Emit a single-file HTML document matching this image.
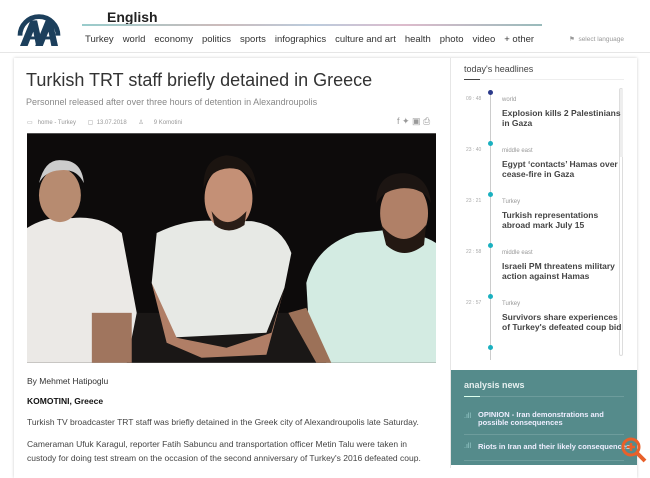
<!DOCTYPE html>
<html><head><meta charset="utf-8"><style>
*{margin:0;padding:0;box-sizing:border-box}
body{width:650px;height:465px;overflow:hidden;background:#fff;font-family:"Liberation Sans",sans-serif;position:relative}
.a{position:absolute;white-space:nowrap}
.nav span{margin-right:9px}
</style></head><body>
<svg class="a" style="left:16px;top:9px" width="46" height="38" viewBox="0 0 48 40">
<path d="M4 28 A20 20 0 0 1 44 28" fill="none" stroke="#1c3f5c" stroke-width="5"/>
<path d="M4 39 L15 12 L22 12 L28 39 L21 39 L18 24 L12 39Z" fill="#1c3f5c"/>
<path d="M20 39 L31 12 L38 12 L44 39 L37 39 L34 24 L28 39Z" fill="#1c3f5c"/>
<rect x="10" y="29" width="29" height="3" fill="#1c3f5c"/>
</svg>
<div class="a" style="left:107px;top:9px;font-size:14px;font-weight:bold;color:#222">English</div>
<div class="a" style="left:82px;top:24px;width:460px;height:2px;background:linear-gradient(90deg,#9cc 0,#cbb 30%,#bcd 50%,#dbc 70%,#9bb 100%)"></div>
<div class="a nav" style="left:85px;top:34px;font-size:9.5px;color:#333"><span>Turkey</span><span>world</span><span>economy</span><span>politics</span><span>sports</span><span>infographics</span><span>culture and art</span><span>health</span><span>photo</span><span>video</span><span>+ other</span></div>
<div class="a" style="left:569px;top:35px;font-size:6.5px;color:#999">⚑ &nbsp;select language</div>
<div class="a" style="left:0;top:52px;width:650px;height:1px;background:#e6e6e6"></div>
<div class="a" style="left:14px;top:58px;width:623px;height:420px;background:#fff;box-shadow:0 0 3px rgba(0,0,0,.2)"></div>
<div class="a" style="left:450px;top:58px;width:1px;height:410px;background:#e6e6e6"></div>
<div class="a" style="left:26px;top:70px;font-size:18px;color:#333">Turkish TRT staff briefly detained in Greece</div>
<div class="a" style="left:26px;top:97px;font-size:9px;color:#888">Personnel released after over three hours of detention in Alexandroupolis</div>
<div class="a" style="left:27px;top:119px;font-size:6px;color:#999">▭ &nbsp; home - Turkey &nbsp; &nbsp; &nbsp; ▢ &nbsp;13.07.2018 &nbsp; &nbsp; &nbsp; ♙ &nbsp; &nbsp; &nbsp;9 Komotini</div>
<div class="a" style="left:397px;top:116px;font-size:9px;color:#999">f ✦ ▣ ⎙</div>
<svg class="a" style="left:27px;top:133px" width="409" height="230" viewBox="0 0 410 230">
<rect width="410" height="230" fill="#0d0b0b"/>
<rect x="0" y="180" width="410" height="50" fill="#1a1716"/>
<path d="M0 95 Q20 82 45 85 Q75 82 95 100 L110 180 L100 230 L0 230Z" fill="#ebe9e6"/>
<ellipse cx="33" cy="62" rx="21" ry="27" fill="#b78b70"/>
<path d="M12 50 Q18 25 35 27 Q55 27 57 50 Q50 35 33 37 Q18 38 12 50Z" fill="#ccc"/>
<rect x="65" y="180" width="40" height="50" fill="#a0755e"/>
<path d="M130 100 Q160 85 190 88 L225 88 Q255 92 265 120 L258 155 L240 200 L140 205 L125 150Z" fill="#e7e9e5"/>
<ellipse cx="202" cy="65" rx="24" ry="32" fill="#c49076"/>
<path d="M177 55 Q176 25 200 22 Q228 24 230 55 Q222 35 203 35 Q183 36 177 55Z" fill="#1b1410"/>
<path d="M185 78 Q200 100 220 78 L218 92 Q202 103 188 92Z" fill="#2a1d17"/>
<path d="M125 150 L140 210 L175 225 L240 222 L258 155 L245 200 L200 215 L150 205Z" fill="#b07e66"/>
<path d="M280 150 Q290 112 330 100 L360 97 Q395 100 410 110 L410 230 L300 230 L282 185Z" fill="#d3ebe2"/>
<ellipse cx="378" cy="80" rx="24" ry="32" fill="#b08067"/>
<path d="M350 70 Q350 40 378 40 Q402 42 405 70 Q398 55 378 55 Q358 56 350 70Z" fill="#1c1512"/>
<path d="M355 92 Q378 120 400 92 L398 112 Q378 128 360 112Z" fill="#231812"/>
<path d="M262 180 L290 230 L305 230 L280 175Z" fill="#9c7158"/>
</svg>
<div class="a" style="left:27px;top:376px;font-size:8.5px;color:#333">By Mehmet Hatipoglu</div>
<div class="a" style="left:27px;top:396px;font-size:8.5px;color:#111;font-weight:bold">KOMOTINI, Greece</div>
<div class="a" style="left:27px;top:417px;font-size:8.5px;color:#444">Turkish TV broadcaster TRT staff was briefly detained in the Greek city of Alexandroupolis late Saturday.</div>
<div class="a" style="left:27px;top:437px;font-size:8.5px;color:#444;line-height:14px">Cameraman Ufuk Karagul, reporter Fatih Sabuncu and transportation officer Metin Talu were taken in<br>custody for doing test stream on the occasion of the second anniversary of Turkey's 2016 defeated coup.</div>
<div class="a" style="left:464px;top:64px;font-size:9px;color:#444">today's headlines</div>
<div class="a" style="left:464px;top:79px;width:16px;height:1px;background:#444"></div>
<div class="a" style="left:480px;top:79px;width:144px;height:1px;background:#eee"></div>
<div class="a" style="left:619px;top:88px;width:4px;height:268px;border:1px solid #ddd;border-radius:2px"></div>
<div class="a" style="left:620px;top:89px;width:3px;height:68px;background:#eee"></div>
<div class="a" style="left:490px;top:92px;width:1px;height:268px;background:#ccc"></div>
<div class="a" style="left:488px;top:90px;width:5px;height:5px;border-radius:50%;background:#2b3a8a"></div>
<div class="a" style="left:488px;top:141px;width:5px;height:5px;border-radius:50%;background:#1ab0c0"></div>
<div class="a" style="left:488px;top:192px;width:5px;height:5px;border-radius:50%;background:#1ab0c0"></div>
<div class="a" style="left:488px;top:243px;width:5px;height:5px;border-radius:50%;background:#1ab0c0"></div>
<div class="a" style="left:488px;top:294px;width:5px;height:5px;border-radius:50%;background:#1ab0c0"></div>
<div class="a" style="left:488px;top:345px;width:5px;height:5px;border-radius:50%;background:#1ab0c0"></div>
<div class="a" style="left:466px;top:74px;font-size:5px;color:#aaa;line-height:51px">09 : 48<br>23 : 40<br>23 : 21<br>22 : 58<br>22 : 57</div>
<div class="a" style="left:502px;top:97px;font-size:6px;color:#999">world</div>
<div class="a" style="left:502px;top:108px;font-size:8.5px;font-weight:bold;color:#444;line-height:10px">Explosion kills 2 Palestinians<br>in Gaza</div>
<div class="a" style="left:502px;top:148px;font-size:6px;color:#999">middle east</div>
<div class="a" style="left:502px;top:159px;font-size:8.5px;font-weight:bold;color:#444;line-height:10px">Egypt ‘contacts’ Hamas over<br>cease-fire in Gaza</div>
<div class="a" style="left:502px;top:199px;font-size:6px;color:#999">Turkey</div>
<div class="a" style="left:502px;top:210px;font-size:8.5px;font-weight:bold;color:#444;line-height:10px">Turkish representations<br>abroad mark July 15</div>
<div class="a" style="left:502px;top:250px;font-size:6px;color:#999">middle east</div>
<div class="a" style="left:502px;top:261px;font-size:8.5px;font-weight:bold;color:#444;line-height:10px">Israeli PM threatens military<br>action against Hamas</div>
<div class="a" style="left:502px;top:301px;font-size:6px;color:#999">Turkey</div>
<div class="a" style="left:502px;top:312px;font-size:8.5px;font-weight:bold;color:#444;line-height:10px">Survivors share experiences<br>of Turkey's defeated coup bid</div>
<div class="a" style="left:451px;top:370px;width:186px;height:95px;background:#558b8b"></div>
<div class="a" style="left:464px;top:380px;font-size:9px;font-weight:bold;color:#e6f0f0">analysis news</div>
<div class="a" style="left:464px;top:396px;width:16px;height:1px;background:#dfe"></div>
<div class="a" style="left:480px;top:396px;width:144px;height:1px;background:#6d9c9c"></div>
<div class="a" style="left:464px;top:413px;font-size:7px;color:#9cc">.ıll</div>
<div class="a" style="left:478px;top:411px;font-size:7.5px;font-weight:bold;color:#eef;line-height:8px">OPINION - Iran demonstrations and<br>possible consequences</div>
<div class="a" style="left:464px;top:434px;width:160px;height:1px;background:#6d9c9c"></div>
<div class="a" style="left:464px;top:443px;font-size:7px;color:#9cc">.ıll</div>
<div class="a" style="left:478px;top:442px;font-size:7.5px;font-weight:bold;color:#eef">Riots in Iran and their likely consequences</div>
<div class="a" style="left:464px;top:460px;width:160px;height:1px;background:#6d9c9c"></div>
<svg class="a" style="left:620px;top:436px" width="28" height="28" viewBox="0 0 28 28"><circle cx="11" cy="11" r="8" fill="none" stroke="#e8602a" stroke-width="3"/><path d="M17 17 L25 25" stroke="#e8602a" stroke-width="4"/><path d="M7 11 H15 M11 7 V15" stroke="#e8602a" stroke-width="2.5"/></svg>
</body></html>
